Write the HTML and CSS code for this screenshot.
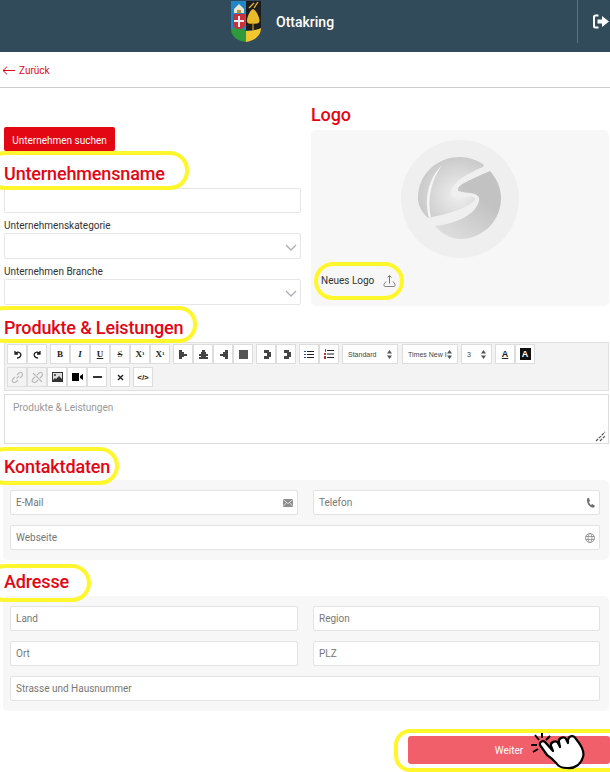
FILE: index.html
```html
<!DOCTYPE html>
<html lang="de">
<head>
    <meta charset="UTF-8">
    <meta name="viewport" content="width=device-width, initial-scale=1.0">
    <title>Ottakring</title>
    <link rel="stylesheet" href="styles.css">
</head>
<body>
    <header class="topbar">
        <div class="brand">
            <svg class="crest" width="32" height="42" viewBox="0 0 32 42">
                <path d="M1 1H16V30H1Z" fill="#1f86c8"/>
                <path d="M16 1H31V30H16Z" fill="#1c1c1c"/>
                <path d="M1 29C7 27 12 28 16 31V42C8 41 1 37 1 29Z" fill="#2f9a3c"/>
                <path d="M16 31C21 31 27 30 31 28C31 36 24 41 16 42Z" fill="#f2c62e"/>
                <path d="M3 14H15V25C15 27 12 29 9 29C6 29 3 27 3 25Z" fill="#c8303a"/>
                <path d="M8 16H10V20H14V22H10V27H8V22H4V20H8Z" fill="#eee"/>
                <path d="M4 13V9L9 4L14 9V13Z" fill="#ece6cf"/>
                <path d="M7 10H11V13H7Z" fill="#b9932f"/>
                <path d="M23 9C26 10 30 18 29.500 21C29 24 26 24 23.500 23.500V30H22.500V23.500C20 24 17 24 17 21C17 17 20 10 23 9Z" fill="#e9b92c"/>
                <path d="M19 8L24 3M24 8L28 2" stroke="#e9b92c" stroke-width="1.300"/>
            </svg>
            <span class="brand-name">Ottakring</span>
        </div>
        <a class="logout" href="#">
            <svg width="16" height="15" viewBox="0 0 16 15">
                <path d="M5.500 1.500H2.500Q1 1.500 1 3V12Q1 13.500 2.500 13.500H5.500" fill="none" stroke="#fff" stroke-width="2"/>
                <path d="M4.500 5.500H9V2L16 7.500L9 13V9.500H4.500Z" fill="#fff"/>
            </svg>
        </a>
    </header>

    <nav class="backrow">
        <a class="back" href="#">
            <svg width="13" height="9" viewBox="0 0 13 9"><path d="M13 4.500H1M5 .7L1 4.500L5 8.300" fill="none" stroke="#e30613" stroke-width="1"/></svg>
            Zurück
        </a>
    </nav>

    <main class="page">
        <div class="top-grid">
            <section class="company">
                <button class="search-btn">Unternehmen suchen</button>
                <h2 class="title title-name">Unternehmensname</h2>
                <input class="field" type="text">
                <label class="field-label">Unternehmenskategorie</label>
                <div class="select">
                    <svg width="12" height="7" viewBox="0 0 12 7"><path d="M1 1L6 6L11 1" fill="none" stroke="#a9adb8" stroke-width="1.300"/></svg>
                </div>
                <label class="field-label">Unternehmen Branche</label>
                <div class="select">
                    <svg width="12" height="7" viewBox="0 0 12 7"><path d="M1 1L6 6L11 1" fill="none" stroke="#a9adb8" stroke-width="1.300"/></svg>
                </div>
            </section>

            <section class="logo-col">
                <h2 class="title">Logo</h2>
                <div class="logo-box">
                    <div class="logo-circle">
                        <svg width="84" height="84" viewBox="0 0 84 84">
                            <defs>
                                <radialGradient id="ballFill" cx="0.620" cy="0.620" r="0.650">
                                    <stop offset="0" stop-color="#efefef"/>
                                    <stop offset="1" stop-color="#c8c8c8"/>
                                </radialGradient>
                                <linearGradient id="darkFill" x1="0.700" y1="0.400" x2="0.300" y2="1">
                                    <stop offset="0" stop-color="#c2c2c2"/>
                                    <stop offset="1" stop-color="#dcdcdc"/>
                                </linearGradient>
                            </defs>
                            <path d="M65 10C50 16 36 24 33 34C32 38 34 40 37 40C44 41 57 38 57 42C56 47 40 55 10 61C3 54 0 48 0 41C0 18 18 0 42 0C50 0 60 3 66 8Z" fill="url(#ballFill)"/>
                            <path d="M24 8C10 22 6 42 11 61L13 60.500C9 42 13 24 24 8Z" fill="#f4f4f4"/>
                            <path d="M72 14C54 22 41 27 40 32C39 35 45 35 52 36C60 37 62 40 61 44C57 58 40 66 17 69C24 77 33 82 42 82C65 82 83 64 83 41C83 31 79 22 72 14Z" fill="url(#darkFill)"/>
                        </svg>
                    </div>
                    <div class="logo-upload">
                        Neues Logo
                        <svg width="13" height="13" viewBox="0 0 13 13"><path d="M3 7.500L1 10V11.500Q1 12.500 2 12.500H11Q12 12.500 12 11.500V10L10 7.500" fill="none" stroke="#888" stroke-width="1"/><path d="M6.500 9.500V1.500M4.500 3.500L6.500 1.500L8.500 3.500" fill="none" stroke="#777" stroke-width="1"/></svg>
                    </div>
                </div>
            </section>
        </div>

        <h2 class="title title-gap">Produkte &amp; Leistungen</h2>
        <div class="toolbar">
            <div class="tool-row">
                <span class="tool-group">
                    <span class="tool"><svg width="9" height="9" viewBox="0 0 9 9"><path d="M2 1V4H5M2 4C3 2 6 1.500 7.500 3.500C8.500 5.500 7 8 4 8" fill="none" stroke="#222" stroke-width="1.300"/></svg></span>
                    <span class="tool"><svg width="9" height="9" viewBox="0 0 9 9"><path d="M7 1V4H4M7 4C6 2 3 1.500 1.500 3.500C.5 5.500 2 8 5 8" fill="none" stroke="#222" stroke-width="1.300"/></svg></span>
                </span>
                <span class="tool-group">
                    <span class="tool tool-b">B</span>
                    <span class="tool tool-i">I</span>
                    <span class="tool tool-u">U</span>
                    <span class="tool tool-s">S</span>
                    <span class="tool tool-x">X<sub>1</sub></span>
                    <span class="tool tool-x">X<sup>1</sup></span>
                </span>
                <span class="tool-group">
                    <span class="tool"><svg width="9" height="9" viewBox="0 0 9 9"><path d="M0 0H3V2H5V4H8V6H5V7H3V9H0Z" fill="#444"/></svg></span>
                    <span class="tool"><svg width="9" height="9" viewBox="0 0 9 9"><path d="M3 0H6V2H7V4H9V6H7V7H9V9H0V7H2V6H0V4H2V2H3Z" fill="#444"/></svg></span>
                    <span class="tool"><svg width="9" height="9" viewBox="0 0 9 9"><path d="M6 0H9V9H6V7H4V6H1V4H4V2H6Z" fill="#444"/></svg></span>
                    <span class="tool"><svg width="9" height="9" viewBox="0 0 9 9"><path d="M0 0H9V9H0Z" fill="#555"/></svg></span>
                </span>
                <span class="tool-group">
                    <span class="tool"><svg width="9" height="9" viewBox="0 0 9 9"><path d="M2 0H7V2H9V7H7V9H2V6H5V3H2Z" fill="#444"/></svg></span>
                    <span class="tool"><svg width="9" height="9" viewBox="0 0 9 9"><path d="M2 0H7V2H9V7H7V9H2V6H5V3H2Z" fill="#444"/></svg></span>
                </span>
                <span class="tool-group">
                    <span class="tool"><svg width="10" height="9" viewBox="0 0 10 9"><path d="M3 1.500H10M3 4.500H10M3 7.500H10" stroke="#222"/><path d="M0 1H2V2H0ZM0 4H2V5H0ZM0 7H2V8H0Z" fill="#1a4fa0"/></svg></span>
                    <span class="tool"><svg width="10" height="10" viewBox="0 0 10 10"><path d="M3 1.500H10M3 5H10M3 8.500H10" stroke="#222"/><path d="M1 0H2V3H1ZM0 4H2V6H0ZM0 7H2V10H0Z" fill="#a33"/></svg></span>
                </span>
                <span class="tool-select sel-std">Standard<svg class="updown" width="5" height="9" viewBox="0 0 5 9"><path d="M2.500 0L5 3.500H0ZM2.500 9L0 5.500H5Z" fill="#555"/></svg></span>
                <span class="tool-select sel-font">Times New I<svg class="updown" width="5" height="9" viewBox="0 0 5 9"><path d="M2.500 0L5 3.500H0ZM2.500 9L0 5.500H5Z" fill="#555"/></svg></span>
                <span class="tool-select sel-size">3<svg class="updown" width="5" height="9" viewBox="0 0 5 9"><path d="M2.500 0L5 3.500H0ZM2.500 9L0 5.500H5Z" fill="#555"/></svg></span>
                <span class="tool-group">
                    <span class="tool tool-color">A</span>
                    <span class="tool"><b class="tool-hilite">A</b></span>
                </span>
            </div>
            <div class="tool-row">
                <span class="tool-group">
                    <span class="tool tool-off"><svg width="13" height="13" viewBox="0 0 13 13"><path d="M5.500 7.500L8 5M4 6L2 8C1 9 1 10.500 2 11S4 12 5 11L7 9M6 4L8 2C9 1 10.500 1 11 2S12 4 11 5L9 7" fill="none" stroke="#bbb" stroke-width="1.200"/></svg></span>
                    <span class="tool tool-off"><svg width="13" height="13" viewBox="0 0 13 13"><path d="M4 6L2 8C1 9 1 10.500 2 11S4 12 5 11L7 9M6 4L8 2C9 1 10.500 1 11 2S12 4 11 5L9 7M2 2L11 11" fill="none" stroke="#bbb" stroke-width="1.200"/></svg></span>
                    <span class="tool"><svg width="11" height="10" viewBox="0 0 11 10"><path d="M0 0H11V10H0Z" fill="#333"/><path d="M1 1H10V7L7 4L4 7L3 6L1 8Z" fill="#ddd"/><circle cx="3" cy="3" r="1" fill="#333"/></svg></span>
                    <span class="tool"><svg width="11" height="8" viewBox="0 0 11 8"><path d="M0 0H7V8H0ZM8 3L11 1V7L8 5Z" fill="#000"/></svg></span>
                    <span class="tool"><svg width="9" height="2" viewBox="0 0 9 2"><path d="M0 0H9V2H0Z" fill="#333"/></svg></span>
                </span>
                <span class="tool-group">
                    <span class="tool"><svg width="7" height="7" viewBox="0 0 7 7"><path d="M1 1L6 6M6 1L1 6" stroke="#222" stroke-width="1.400"/></svg></span>
                </span>
                <span class="tool-group">
                    <span class="tool tool-code">&lt;/&gt;</span>
                </span>
            </div>
        </div>
        <div class="editor">
            Produkte &amp; Leistungen
            <svg class="grip" width="11" height="11" viewBox="0 0 11 11"><path d="M1 10L10 1M5 10L10 5" stroke="#555" stroke-width="1.200" stroke-dasharray="3 1"/></svg>
        </div>

        <h2 class="title title-gap2">Kontaktdaten</h2>
        <section class="panel contact-panel">
            <div class="input-wrap">E-Mail
                <svg width="10" height="8" viewBox="0 0 10 8"><path d="M0 0H10V8H0Z" fill="#8d8d8d"/><path d="M0 .5L5 4.500L10 .5M0 7.500L3.500 3.500M10 7.500L6.500 3.500" fill="none" stroke="#e8e8e8" stroke-width=".8"/></svg>
            </div>
            <div class="input-wrap">Telefon
                <svg width="9" height="10" viewBox="0 0 9 10"><path d="M1 0.500L3 0L4 3L3 4C3.300 5.300 4 6.300 5 7L6.300 6L9 7.800L8 9.600C4 10 .5 6 1 .5Z" fill="#707070"/></svg>
            </div>
            <div class="input-wrap span-2">Webseite
                <svg width="10" height="10" viewBox="0 0 10 10"><circle cx="5" cy="5" r="4.500" fill="none" stroke="#888" stroke-width=".8"/><ellipse cx="5" cy="5" rx="2" ry="4.500" fill="none" stroke="#888" stroke-width=".8"/><path d="M.5 3.500H9.500M.5 6.500H9.500" stroke="#888" stroke-width=".8"/></svg>
            </div>
        </section>

        <h2 class="title title-gap3">Adresse</h2>
        <section class="panel address-panel">
            <div class="input-wrap">Land</div>
            <div class="input-wrap">Region</div>
            <div class="input-wrap">Ort</div>
            <div class="input-wrap">PLZ</div>
            <div class="input-wrap span-2">Strasse und Hausnummer</div>
        </section>

        <div class="actions">
            <button class="next-btn">Weiter</button>
        </div>
    </main>

    <!-- gelbe Markierungen ueber dem Formular -->
    <span class="mark mark-name"></span>
    <span class="mark mark-logo"></span>
    <span class="mark mark-prod"></span>
    <span class="mark mark-contact"></span>
    <span class="mark mark-addr"></span>
    <span class="mark mark-next"></span>

    <svg class="hand" width="60" height="41" viewBox="0 0 60 41">
        <path d="M4 4L8 9M11 2V7M19 5L15 9M0 14H6M2 21L7 18" stroke="#000" stroke-width="2" fill="none"/>
        <path d="M9 14C8 11 12 9 14 11L22 20L20 15C19 11 25 9 27 12L29 16L28 11C27 7 33 5 35 8L37 12L37 9C38 4 43 4 45 8C50 14 54 20 52 26C50 33 44 38 36 37C31 37 28 36 26 33C22 28 19 26 16 24Z" fill="#fff" stroke="#000" stroke-width="2.200" stroke-linejoin="round"/>
    </svg>
</body>
</html>
```

FILE: styles.css
```css
* {
    box-sizing: border-box;
}

body {
    margin: 0;
    font-family: Roboto, "Noto Sans", Arial, sans-serif;
    font-size: 10px;
    color: #333;
    background: #fff;
    position: relative;
    height: 772px;
    overflow: hidden;
}

/* top bar */
.topbar {
    height: 52px;
    background: #324b5a;
    display: flex;
    justify-content: flex-end;
    position: relative;
}

.brand {
    position: absolute;
    left: 230px;
    top: 0;
    display: flex;
    align-items: center;
    gap: 14px;
    height: 42px;
}

.brand-name {
    color: #fff;
    font-size: 14px;
    font-weight: 500;
    padding-top: 2px;
}

.logout {
    width: 33px;
    height: 43px;
    border-left: 1px solid #5d7280;
    display: flex;
    align-items: center;
    padding-left: 15px;
}

.backrow {
    height: 36px;
    border-bottom: 1px solid #ccc;
    padding: 13px 0 0 2px;
}

.back {
    color: #e30613;
    text-decoration: none;
    display: flex;
    align-items: center;
    gap: 4px;
    font-size: 10px;
}

.page {
    padding: 0 1px 0 4px;
}

.top-grid {
    display: grid;
    grid-template-columns: 297px 298px;
    gap: 10px;
}

.title {
    margin: 0;
    color: #e30613;
    font-size: 18px;
    font-weight: 500;
    letter-spacing: -0.15px;
    line-height: 24px;
}

/* left column */
.company {
    padding-top: 39px;
}

.search-btn {
    display: block;
    width: 111px;
    height: 24px;
    background: #e30613;
    color: #fff;
    border: 0;
    border-radius: 2px;
    font-family: inherit;
    font-size: 10px;
    padding: 2px 0 0;
}

.title-name {
    margin-top: 11px;
    height: 26px;
}

.field, .select {
    display: block;
    width: 100%;
    background: #fff;
    border: 1px solid #e6e6e6;
    border-radius: 2px;
}

.field {
    height: 25px;
}

.select {
    height: 26px;
    display: flex;
    align-items: center;
    justify-content: flex-end;
    padding: 2px 3px 0 0;
}

.field-label {
    display: block;
    height: 20px;
    padding-top: 5px;
    line-height: 15px;
    font-size: 10px;
}

/* logo */
.logo-col {
    padding-top: 15px;
}

.logo-box {
    height: 176px;
    margin-top: 3px;
    background: #f7f7f7;
    border-radius: 5px;
    position: relative;
    padding-top: 10px;
}

.logo-circle {
    width: 118px;
    height: 118px;
    margin: 0 auto;
    border-radius: 50%;
    background: #efefef;
    display: flex;
    align-items: center;
    justify-content: center;
}

.logo-upload {
    display: flex;
    align-items: center;
    gap: 9px;
    margin: 16px 0 0 10px;
    font-size: 10px;
    color: #333;
}

/* editor */
.title-gap {
    margin-top: 10px;
    height: 26px;
}

.toolbar {
    height: 49px;
    background: #f3f3f3;
    border: 1px solid #e0e0e0;
    padding: 1px 2px;
    display: flex;
    flex-direction: column;
    gap: 3px;
}

.tool-row {
    display: flex;
    align-items: center;
    gap: 3px;
    height: 20px;
}

.tool-group {
    display: flex;
}

.tool {
    width: 20px;
    height: 20px;
    background: #fff;
    border: 1px solid #ddd;
    display: flex;
    align-items: center;
    justify-content: center;
    font-size: 9px;
    color: #222;
    font-family: "Liberation Serif", serif;
}

.tool-b { font-weight: bold; }
.tool-i { font-style: italic; font-weight: bold; }
.tool-u { text-decoration: underline; font-weight: bold; }
.tool-s { text-decoration: line-through; }
.tool-x { font-weight: bold; }

.tool-x sub, .tool-x sup {
    font-size: 5px;
    line-height: 0;
}

.tool-off {
    background: #f3f3f3;
}

.tool-code {
    font-family: "Liberation Sans", sans-serif;
    font-size: 8px;
    font-weight: bold;
}

.tool-color {
    font-family: "Liberation Sans", sans-serif;
    font-weight: bold;
    text-decoration: underline;
}

.tool-hilite {
    display: block;
    width: 11px;
    height: 12px;
    line-height: 12px;
    background: #111;
    color: #fff;
    text-align: center;
    font-family: "Liberation Sans", sans-serif;
}

.tool-select {
    height: 20px;
    background: #fff;
    border: 1px solid #ddd;
    display: flex;
    align-items: center;
    font-family: "Liberation Sans", sans-serif;
    font-size: 7px;
    color: #444;
    padding: 0 5px;
    position: relative;
    white-space: nowrap;
}

.sel-std { width: 56px; }
.sel-font { width: 56px; margin-left: 1px; }
.sel-size { width: 31px; }

.updown {
    position: absolute;
    right: 5px;
    top: 5px;
}

.editor {
    height: 50px;
    margin-top: 3px;
    border: 1px solid #ddd;
    background: #fff;
    padding: 7px 8px;
    font-size: 10px;
    color: #999;
    position: relative;
}

.grip {
    position: absolute;
    right: 2px;
    bottom: 1px;
}

/* panels */
.title-gap2 {
    margin-top: 11px;
    height: 25px;
}

.title-gap3 {
    margin-top: 10px;
    height: 26px;
}

.panel {
    margin-left: -1px;
    background: #f7f7f7;
    border-radius: 5px;
    padding: 10px 8px 10px 7px;
    display: grid;
    grid-template-columns: 288px 287px;
    column-gap: 15px;
    row-gap: 10px;
}

.input-wrap {
    height: 25px;
    background: #fff;
    border: 1px solid #e3e3e3;
    border-radius: 2px;
    display: flex;
    align-items: center;
    justify-content: space-between;
    padding: 0 4px 0 5px;
    font-size: 10px;
    color: #777;
}

.span-2 {
    grid-column: span 2;
}

.actions {
    display: flex;
    justify-content: flex-end;
    margin: 25px -1px 0 0;
}

.next-btn {
    width: 202px;
    height: 28px;
    background: #f05f6a;
    color: #fff;
    border: 0;
    border-radius: 3px;
    font-family: inherit;
    font-size: 10px;
    padding: 0;
}

/* yellow marks */
.mark {
    position: absolute;
    border: 4px solid #fff72b;
    border-radius: 18px;
    pointer-events: none;
}

.mark-name { left: -14px; top: 151px; width: 203px; height: 39px; border-radius: 19px; }
.mark-logo { left: 314px; top: 262px; width: 90px; height: 38px; border-radius: 19px; }
.mark-prod { left: -14px; top: 306px; width: 211px; height: 37px; border-radius: 18px; }
.mark-contact { left: -14px; top: 447px; width: 133px; height: 38px; border-radius: 19px; }
.mark-addr { left: -14px; top: 564px; width: 105px; height: 38px; border-radius: 19px; }
.mark-next { left: 394px; top: 729px; width: 240px; height: 43px; border-radius: 16px; }

.hand {
    position: absolute;
    left: 531px;
    top: 731px;
}
```
